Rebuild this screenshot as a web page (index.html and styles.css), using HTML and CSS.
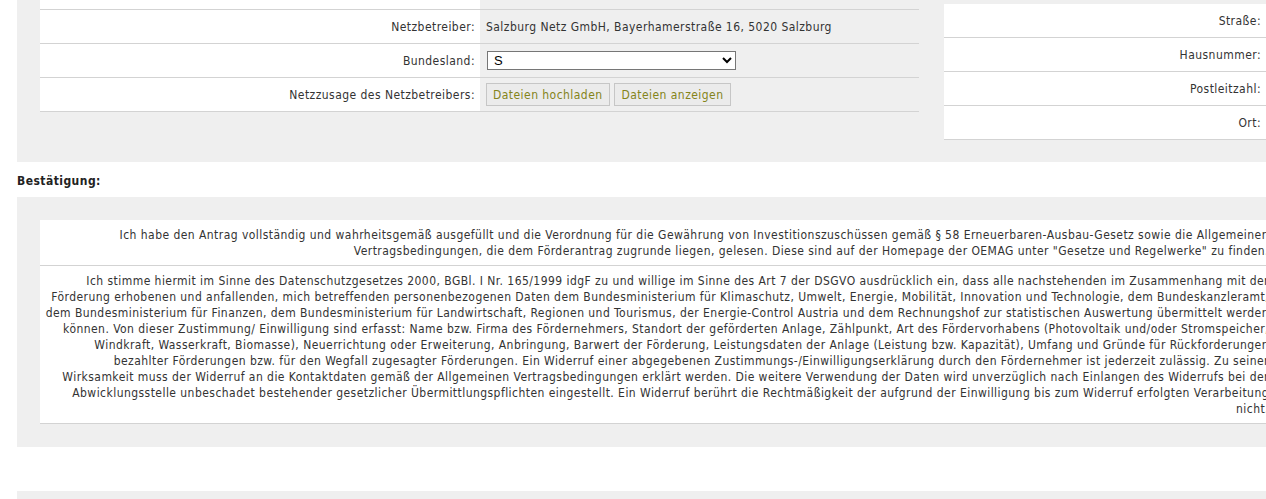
FILE: index.html
```html
<!DOCTYPE html>
<html lang="de">
<head>
    <meta charset="UTF-8">
    <meta name="viewport" content="width=device-width, initial-scale=1.0">
    <title>Antrag - Bestätigung</title>
    <link rel="stylesheet" href="styles.css">
</head>
<body>
    <div class="page">
        <div class="panel top-panel">
            <table class="form-table main-form">
                <colgroup>
                    <col class="label-col">
                    <col class="value-col">
                </colgroup>
                <tr class="cut-row">
                    <td class="label"></td>
                    <td class="value"></td>
                </tr>
                <tr>
                    <td class="label">Netzbetreiber:</td>
                    <td class="value">Salzburg Netz GmbH, Bayerhamerstraße 16, 5020 Salzburg</td>
                </tr>
                <tr>
                    <td class="label">Bundesland:</td>
                    <td class="value">
                        <select class="state-select" name="bundesland">
                            <option value="S">S</option>
                            <option value="W">W</option>
                            <option value="N">N</option>
                        </select>
                    </td>
                </tr>
                <tr>
                    <td class="label">Netzzusage des Netzbetreibers:</td>
                    <td class="value">
                        <button type="button" class="file-btn">Dateien hochladen</button>
                        <button type="button" class="file-btn">Dateien anzeigen</button>
                    </td>
                </tr>
            </table>

            <table class="form-table address-form">
                <colgroup>
                    <col class="addr-label-col">
                    <col class="addr-value-col">
                </colgroup>
                <tr>
                    <td class="label">Straße:</td>
                    <td class="value"></td>
                </tr>
                <tr>
                    <td class="label">Hausnummer:</td>
                    <td class="value"></td>
                </tr>
                <tr>
                    <td class="label">Postleitzahl:</td>
                    <td class="value"></td>
                </tr>
                <tr>
                    <td class="label">Ort:</td>
                    <td class="value"></td>
                </tr>
            </table>
        </div>

        <h3 class="section-title">Bestätigung:</h3>

        <div class="panel confirm-panel">
            <table class="confirm-table">
                <tr>
                    <td>Ich habe den Antrag vollständig und wahrheitsgemäß ausgefüllt und die Verordnung für die Gewährung von Investitionszuschüssen gemäß § 58 Erneuerbaren-Ausbau-Gesetz sowie die Allgemeinen<br>Vertragsbedingungen, die dem Förderantrag zugrunde liegen, gelesen. Diese sind auf der Homepage der OEMAG unter "Gesetze und Regelwerke" zu finden.</td>
                </tr>
                <tr>
                    <td>Ich stimme hiermit im Sinne des Datenschutzgesetzes 2000, BGBl. I Nr. 165/1999 idgF zu und willige im Sinne des Art 7 der DSGVO ausdrücklich ein, dass alle nachstehenden im Zusammenhang mit der<br>Förderung erhobenen und anfallenden, mich betreffenden personenbezogenen Daten dem Bundesministerium für Klimaschutz, Umwelt, Energie, Mobilität, Innovation und Technologie, dem Bundeskanzleramt,<br>dem Bundesministerium für Finanzen, dem Bundesministerium für Landwirtschaft, Regionen und Tourismus, der Energie-Control Austria und dem Rechnungshof zur statistischen Auswertung übermittelt werden<br>können. Von dieser Zustimmung/ Einwilligung sind erfasst: Name bzw. Firma des Fördernehmers, Standort der geförderten Anlage, Zählpunkt, Art des Fördervorhabens (Photovoltaik und/oder Stromspeicher,<br>Windkraft, Wasserkraft, Biomasse), Neuerrichtung oder Erweiterung, Anbringung, Barwert der Förderung, Leistungsdaten der Anlage (Leistung bzw. Kapazität), Umfang und Gründe für Rückforderungen<br>bezahlter Förderungen bzw. für den Wegfall zugesagter Förderungen. Ein Widerruf einer abgegebenen Zustimmungs-/Einwilligungserklärung durch den Fördernehmer ist jederzeit zulässig. Zu seiner<br>Wirksamkeit muss der Widerruf an die Kontaktdaten gemäß der Allgemeinen Vertragsbedingungen erklärt werden. Die weitere Verwendung der Daten wird unverzüglich nach Einlangen des Widerrufs bei der<br>Abwicklungsstelle unbeschadet bestehender gesetzlicher Übermittlungspflichten eingestellt. Ein Widerruf berührt die Rechtmäßigkeit der aufgrund der Einwilligung bis zum Widerruf erfolgten Verarbeitung<br>nicht.</td>
                </tr>
            </table>
        </div>

        <div class="panel next-panel"></div>
    </div>
</body>
</html>
```

FILE: styles.css
```css
html, body {
    margin: 0;
    padding: 0;
    overflow-x: hidden;
}
body {
    font-family: "DejaVu Sans Condensed", "DejaVu Sans", sans-serif;
    font-stretch: condensed;
    font-size: 12px;
    letter-spacing: 0.45px;
    color: #333;
    background-color: #fff;
}
.page {
    width: 1320px;
}

.panel {
    background-color: #efefef;
    margin-left: 17px;
}

/* top section with the two forms */
.top-panel {
    display: flex;
    align-items: flex-start;
    gap: 25px;
    padding: 0 0 22px 23px;
}
.form-table {
    border-collapse: separate;
    border-spacing: 0;
    table-layout: fixed;
}
.form-table td {
    height: 33px;
    padding: 0;
    border-bottom: 1px solid #d3d3d3;
    vertical-align: middle;
}
.form-table .label {
    background-color: #fff;
    text-align: right;
    padding-right: 5px;
}
.form-table .value {
    padding-left: 6px;
    white-space: nowrap;
}
.form-table .cut-row td {
    height: 9px;
}

.main-form {
    width: 879px;
}
.label-col {
    width: 440px;
}
.value-col {
    width: 439px;
}

.address-form {
    width: 520px;
    margin-top: 4px;
}
.addr-label-col {
    width: 322px;
}

.state-select {
    width: 249px;
    height: 19px;
    font-family: "Liberation Sans", Arial, sans-serif;
    font-size: 13px;
    letter-spacing: 0;
    color: #000;
    background-color: #fff;
    border: 1px solid #767676;
    border-radius: 0;
    padding: 0 2px;
    margin: 0 0 0 1px;
}

.file-btn {
    font-family: inherit;
    font-stretch: condensed;
    font-size: 12px;
    letter-spacing: 0.45px;
    color: #84841a;
    background-color: #ebebeb;
    border: 1px solid #c6c6c6;
    border-radius: 0;
    height: 23px;
    padding: 0 6px;
    margin: 0 1px 0 0;
    cursor: pointer;
}
.file-btn:hover {
    background-color: #e2e2e2;
}

/* confirmation */
.section-title {
    margin: 0;
    padding: 11px 0 8px 17px;
    font-size: 12px;
    line-height: 16px;
    font-weight: bold;
    color: #222;
}
.confirm-panel {
    padding: 23px;
}
.confirm-table {
    width: 1234px;
    border-collapse: separate;
    border-spacing: 0;
}
.confirm-table td {
    background-color: #fff;
    text-align: right;
    line-height: 16px;
    padding: 7px 5px 6px 5px;
    border-bottom: 1px solid #d3d3d3;
    white-space: nowrap;
}

.next-panel {
    margin-top: 44px;
    height: 20px;
}
```
